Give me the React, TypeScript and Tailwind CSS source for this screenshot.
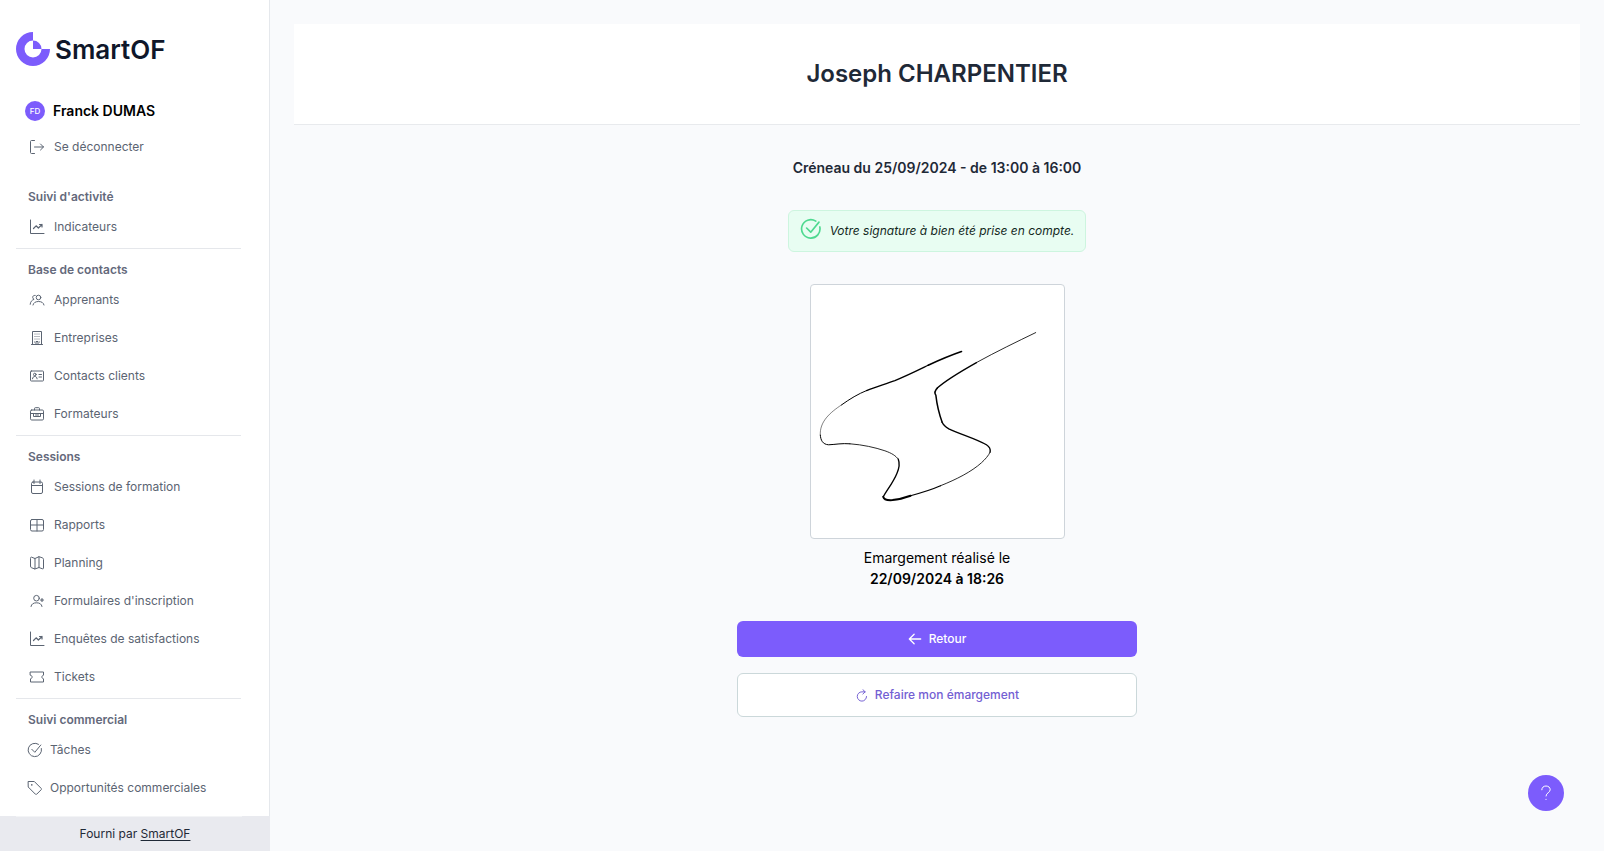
import type { ReactNode } from 'react'

interface NavItem {
  label: string
  icon: ReactNode
  flush?: boolean
}

interface NavSection {
  title: string
  items: NavItem[]
}

function Icon({
  children,
  className = 'h-4 w-4',
}: {
  children: ReactNode
  className?: string
}): React.JSX.Element {
  return (
    <svg
      className={`shrink-0 ${className}`}
      viewBox="0 0 16 16"
      fill="none"
      stroke="currentColor"
      strokeLinecap="round"
      strokeLinejoin="round"
      aria-hidden="true"
    >
      {children}
    </svg>
  )
}

const chartIcon = (
  <Icon>
    <path d="M1.5 1v13.5H15" />
    <path strokeWidth="1.2" d="M4.5 9.5l2.600-2.700 2.300 2.200L13 5.500M10.500 5.500H13V8" />
  </Icon>
)

const checkPaths = (
  <path d="M14.400 6.500A6.700 6.700 0 1 1 11.500 2.300M4.800 7.300l3 3 6-7.300" />
)

const sections: NavSection[] = [
  {
    title: "Suivi d'activité",
    items: [{ label: 'Indicateurs', icon: chartIcon }],
  },
  {
    title: 'Base de contacts',
    items: [
      {
        label: 'Apprenants',
        icon: (
          <Icon>
            <circle cx="9.500" cy="5.500" r="2.300" />
            <path d="M4 13c.4-2.300 2.600-3.500 5.500-3.500s5.100 1.200 5.500 3.500M6.200 3.400C4.500 3.200 3.600 4.200 3.700 5.400c0 1 .6 1.600 1.400 1.900C2.800 8.200 1.400 9.700 1.200 12.300" />
          </Icon>
        ),
      },
      {
        label: 'Entreprises',
        icon: (
          <Icon>
            <path d="M3.500 14V1.500h9V14M2.500 14.500h11M7 14v-2.500h2V14" />
            <path d="M6 4v.1M8 4v.1M10 4v.1M6 6.500v.1M8 6.500v.1M10 6.500v.1M6 9v.1M8 9v.1M10 9v.1M5.500 12v.1M10.500 12v.1" />
          </Icon>
        ),
      },
      {
        label: 'Contacts clients',
        icon: (
          <Icon>
            <rect x="1.500" y="3" width="13" height="10" rx=".8" />
            <circle cx="5.800" cy="6.500" r="1.300" />
            <path d="M3.500 10.800c.2-1.600 1-2.300 2.300-2.300s2.100.7 2.300 2.300M10 6.500h2.500M10 9h2.500" />
          </Icon>
        ),
      },
      {
        label: 'Formateurs',
        icon: (
          <Icon>
            <rect x="1.500" y="4" width="13" height="10" rx="1.200" />
            <path d="M5.500 4V2.500c0-.5.300-.8.800-.8h3.400c.5 0 .8.300.8.800V4M1.500 7.500h13M4.500 7.500v3h7v-3M6.500 9h3" />
          </Icon>
        ),
      },
    ],
  },
  {
    title: 'Sessions',
    items: [
      {
        label: 'Sessions de formation',
        icon: (
          <Icon>
            <rect x="2.500" y="3" width="11" height="11.500" rx="1.500" />
            <path d="M2.500 6.500h11M5 1v3.500M11 1v3.500" />
          </Icon>
        ),
      },
      {
        label: 'Rapports',
        icon: (
          <Icon>
            <rect x="1.500" y="2.500" width="13" height="11.500" rx="1.500" />
            <path d="M8 2.500V14M1.500 8h13" />
          </Icon>
        ),
      },
      {
        label: 'Planning',
        icon: (
          <Icon>
            <path d="M1.500 3c0-.7.500-1 1.100-.8L6 3.500V14l-3.300-1.200c-.8-.2-1.200-.7-1.200-1.400zM6 3.500l4-1.800v10.800L6 14M10 1.700l3.300 1.100c.8.300 1.200.8 1.200 1.500V13c0 .7-.4 1-1.100.8L10 12.500" />
          </Icon>
        ),
      },
      {
        label: "Formulaires d'inscription",
        icon: (
          <Icon>
            <circle cx="7.500" cy="5.200" r="2.800" />
            <path d="M2 13.500c.4-2.600 2.500-3.700 5.500-3.700s5.100 1.100 5.500 3.700" />
            <path strokeWidth="1.200" d="M13 5.500v3M11.500 7h3" />
          </Icon>
        ),
      },
      { label: 'Enquêtes de satisfactions', icon: chartIcon },
      {
        label: 'Tickets',
        icon: (
          <Icon>
            <path d="M1.500 3h13v3.200c-1 .2-1.600.9-1.600 1.800s.6 1.600 1.600 1.800V13h-13V9.800c1-.2 1.600-.9 1.600-1.800s-.6-1.600-1.600-1.800z" />
          </Icon>
        ),
      },
    ],
  },
  {
    title: 'Suivi commercial',
    items: [
      { label: 'Tâches', flush: true, icon: <Icon>{checkPaths}</Icon> },
      {
        label: 'Opportunités commerciales',
        flush: true,
        icon: (
          <Icon>
            <path d="M1.500 1.500h5.800l6.800 6.800c.5.500.5 1 0 1.500l-4.300 4.300c-.5.500-1 .5-1.500 0L1.500 7.300z" />
            <path d="M4.800 4.800v.1" strokeWidth="1.600" />
          </Icon>
        ),
      },
    ],
  },
]

function Logo(): React.JSX.Element {
  return (
    <div className="flex h-[34px] items-center gap-[5px]">
      <svg
        className="h-[34px] w-[34px] shrink-0"
        viewBox="0 0 34 34"
        fill="#7c5cfc"
        aria-hidden="true"
      >
        <path d="M17 0A17 17 0 1 0 34 17H25.500A8.500 8.500 0 1 1 17 8.500z" />
        <path d="M17 8.500A8.500 8.500 0 0 1 25.500 17H17z" />
      </svg>
      <span className="text-[26px] font-semibold text-[#0f172a]">SmartOF</span>
    </div>
  )
}

function Sidebar(): React.JSX.Element {
  return (
    <aside className="flex w-[270px] shrink-0 flex-col border-r border-[#e5e8ec] bg-white">
      <div className="px-4 pt-8">
        <Logo />
      </div>
      <div className="mt-[35px] flex h-5 items-center gap-2 px-[25px]">
        <span className="flex h-5 w-5 items-center justify-center rounded-full bg-[#7c5cfc] text-[8px] font-medium text-white">
          FD
        </span>
        <span className="text-sm font-semibold text-black">Franck DUMAS</span>
      </div>
      <a
        href="#logout"
        className="mt-[7px] flex h-[38px] items-center gap-[9px] px-[29px] text-xs text-[#5b6472]"
      >
        <Icon>
          <path d="M5.500 1.500h-3c-.6 0-1 .4-1 1v11c0 .6.400 1 1 1h3M5.500 8h9M11.500 5l3 3-3 3" />
        </Icon>
        Se déconnecter
      </a>

      <nav className="mt-2.5 min-h-0 flex-1 overflow-hidden pr-7 pl-4">
        {sections.map((section) => (
          <section
            key={section.title}
            className="border-b border-[#e5e7eb] pt-2.5 pb-0.5 last:border-b-0"
          >
            <h2 className="px-3 text-xs leading-[22px] font-semibold text-[#64697b]">
              {section.title}
            </h2>
            {section.items.map((item) => (
              <a
                key={item.label}
                href="#nav"
                className={`flex h-[38px] items-center text-xs text-[#5b6472] ${
                  item.flush ? 'gap-[7px] pl-[11px]' : 'gap-[9px] pl-[13px]'
                }`}
              >
                {item.icon}
                {item.label}
              </a>
            ))}
          </section>
        ))}
      </nav>

      <footer className="-mr-px h-[35px] bg-[#e9eaef] pr-7 pl-4 text-xs text-[#1f2937]">
        <hr className="border-[#f3f4f6]" />
        <p className="-mr-3 flex h-[34px] items-center justify-center">
          <span>
            Fourni par{' '}
            <a href="#smartof" className="underline underline-offset-2">
              SmartOF
            </a>
          </span>
        </p>
      </footer>
    </aside>
  )
}

function Signature(): React.JSX.Element {
  return (
    <div className="mt-8 h-[255px] w-[255px] rounded border border-[#ced4da] bg-white">
      <svg
        className="h-full w-full"
        viewBox="33 29 760 760"
        fill="none"
        stroke="black"
        strokeLinecap="round"
        strokeLinejoin="round"
        role="img"
        aria-label="Signature"
      >
        <path strokeWidth="5" d="M485 229C450 241 420 254 385 270" />
        <path strokeWidth="4" d="M385 270C350 287 320 302 285 316C255 327 228 335 200 346" />
        <path strokeWidth="3" d="M200 346C175 356 150 371 125 389" />
        <path strokeWidth="1.500" d="M125 389C90 412 58 440 61 480" />
        <path strokeWidth="3" d="M61 480C62 495 68 508 86 509C108 508 125 504 150 506" />
        <path strokeWidth="2.500" d="M150 506C190 509 225 517 255 527C275 534 288 542 295 552" />
        <path strokeWidth="4" d="M295 552C300 565 297 582 291 595C281 620 262 644 250 665" />
        <path strokeWidth="6" d="M250 665C252 675 264 676 278 675C298 673 315 668 332 662" />
        <path strokeWidth="3.500" d="M332 662C365 653 395 644 422 632" />
        <path strokeWidth="2.500" d="M422 632C470 613 515 590 545 563C555 554 567 541 571 531" />
        <path strokeWidth="4" d="M571 531C573 521 568 514 560 509C530 491 480 477 447 461C439 456 430 449 427 441" />
        <path strokeWidth="4.500" d="M427 441C416 412 411 386 408 360C403 353 406 345 413 338" />
        <path strokeWidth="4" d="M413 338C438 315 475 293 530 262" />
        <path strokeWidth="2.500" d="M530 262C590 229 650 200 708 172" />
      </svg>
    </div>
  )
}

export default function App(): React.JSX.Element {
  return (
    <div className="flex h-screen bg-[#f9fafc] font-['Inter',sans-serif]">
      <Sidebar />

      <main className="min-w-0 flex-1 overflow-auto p-6">
        <header className="flex h-[101px] items-center justify-center border-b border-[#e8eaed] bg-white">
          <h1 className="text-2xl font-semibold text-[#1f2937]">
            Joseph CHARPENTIER
          </h1>
        </header>

        <div className="flex flex-col items-center">
          <h2 className="mt-8 text-sm leading-[22px] font-semibold text-[#1f2937]">
            Créneau du 25/09/2024 - de 13:00 à 16:00
          </h2>

          <div
            role="status"
            className="mt-[31px] flex h-[42px] items-center gap-2 rounded-md border border-[#cdf5df] bg-[#e8fdf2] px-[11px] text-xs text-[#14291e]"
          >
            <Icon className="mb-1 h-[22px] w-[22px] text-[#4ed990]">
              <g strokeWidth="1.2">{checkPaths}</g>
            </Icon>
            <em>Votre signature à bien été prise en compte.</em>
          </div>

          <Signature />

          <p className="mt-2 text-center text-sm leading-[21px] text-black">
            Emargement réalisé le
            <br />
            <strong className="font-semibold">22/09/2024 à 18:26</strong>
          </p>

          <div className="mt-8 flex w-full max-w-[400px] flex-col gap-4">
            <button
              type="button"
              className="flex h-9 items-center justify-center gap-[7px] rounded-md bg-[#7c5cfc] text-xs font-medium text-white"
            >
              <Icon className="h-[14px] w-[14px]">
                <path strokeWidth="1.500" d="M14.500 8h-13M7 2.500L1.500 8 7 13.500" />
              </Icon>
              Retour
            </button>
            <button
              type="button"
              className="flex h-11 items-center justify-center gap-[7px] rounded-md border border-[#cbd8da] bg-white text-xs font-medium text-[#7360d3]"
            >
              <Icon className="h-[13px] w-[13px]">
                <path strokeWidth="1.200" d="M12.500 3.500H8.500A5.700 5.700 0 1 0 14.200 9.200M9.700.8l2.800 2.700-2.800 2.700" />
              </Icon>
              Refaire mon émargement
            </button>
          </div>
        </div>
      </main>

      <button
        type="button"
        aria-label="Aide"
        className="fixed right-10 bottom-10 flex h-9 w-9 items-center justify-center rounded-full bg-[#7c5cfc] text-white"
      >
        <Icon>
          <path d="M3.800 4.800C3.800 2.500 5.600 1 8 1s4.200 1.500 4.200 3.700c0 3-4.200 3-4.200 6.300M8 14.300v.2" />
        </Icon>
      </button>
    </div>
  )
}
